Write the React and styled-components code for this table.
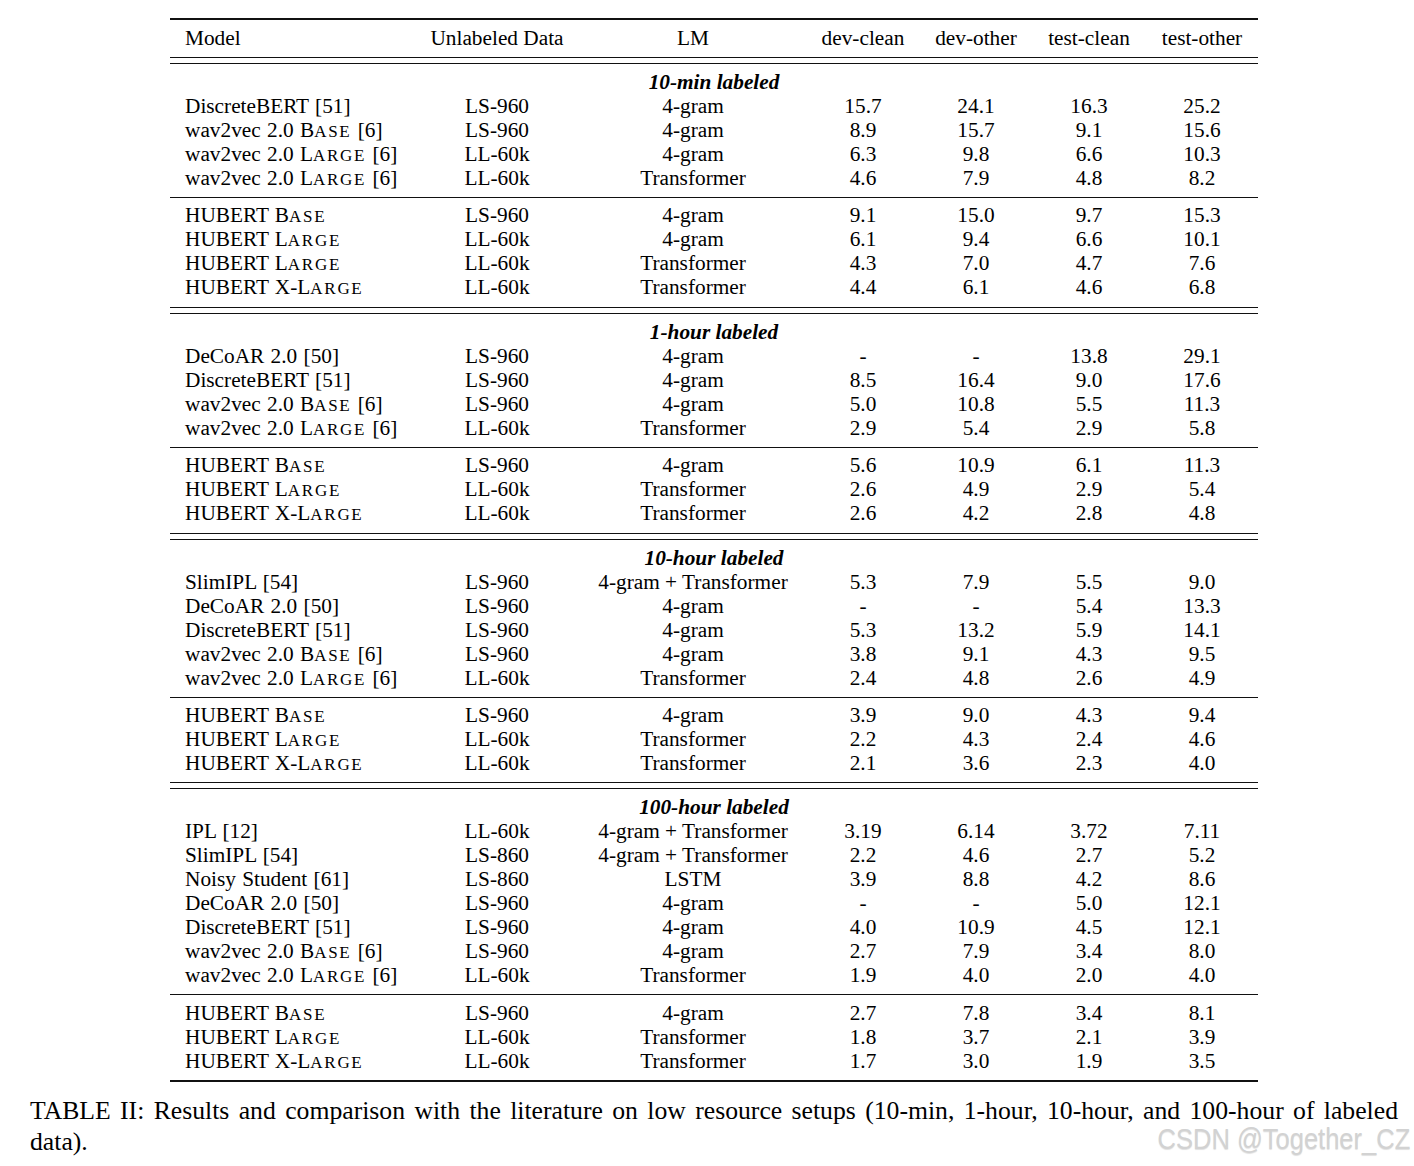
import React from "react";
import styled, { createGlobalStyle } from "styled-components";

const Global = createGlobalStyle`
  html, body { margin: 0; padding: 0; background: #fff; }
  body { font-family: "Liberation Serif", "Times New Roman", serif; color: #000; }
`;

const Page = styled.div`
  position: relative;
  width: 1414px;
  height: 1166px;
  overflow: hidden;
  padding-top: 18px;
  box-sizing: border-box;
`;

const Table = styled.div`
  margin-left: 170px;
  width: 1088px;
  font-size: 21.3px;
`;

const Rule = styled.div`
  height: ${(p) => (p.$thick ? 2 : 1)}px;
  background: #111;
  margin: ${(p) => p.$m || "0"};
  ${(p) =>
    p.$double &&
    `
    height: 1px;
    box-shadow: 0 6px 0 #111;
    margin-bottom: 12px;
  `}
`;

const Row = styled.div`
  display: grid;
  grid-template-columns: 244.5px 165px 227px 113px 113px 113px 113px;
  height: 24px;
  line-height: 24px;
  white-space: nowrap;
`;

const Cell = styled.div`
  text-align: ${(p) => p.$align || "center"};
  padding-left: ${(p) => (p.$align === "left" ? "15px" : "0")};
  word-spacing: ${(p) => (p.$align === "left" ? "1px" : "0")};
`;

const Small = styled.span`
  font-size: 0.8em;
  text-transform: uppercase;
  letter-spacing: 1.7px;
`;

const SectionTitle = styled.div`
  height: 24px;
  line-height: 24px;
  text-align: center;
  font-weight: bold;
  font-style: italic;
`;

const Group = styled.div``;

const Caption = styled.p`
  margin: 13px 0 0 30px;
  width: 1368px;
  font-size: 25.7px;
  line-height: 31px;
  word-spacing: 1.5px;
  text-align: justify;
`;

const Watermark = styled.div`
  position: absolute;
  right: 4px;
  top: 1122px;
  font-family: "Liberation Sans", Arial, sans-serif;
  font-size: 30px;
  color: #d2d2d2;
  text-shadow: 0 1px 1px rgba(0, 0, 0, 0.12);
  transform: scaleX(0.85);
  transform-origin: right center;
  white-space: nowrap;
`;

const W2VB = () => (
  <>wav2vec 2.0 B<Small>ase</Small> [6]</>
);
const W2VL = () => (
  <>wav2vec 2.0 L<Small>arge</Small> [6]</>
);
const HB = () => (<>HUBERT B<Small>ase</Small></>);
const HL = () => (<>HUBERT L<Small>arge</Small></>);
const HXL = () => (<>HUBERT X-L<Small>arge</Small></>);

const sections = [
  {
    title: "10-min labeled",
    a: [
      ["DiscreteBERT [51]", "LS-960", "4-gram", "15.7", "24.1", "16.3", "25.2"],
      [<W2VB />, "LS-960", "4-gram", "8.9", "15.7", "9.1", "15.6"],
      [<W2VL />, "LL-60k", "4-gram", "6.3", "9.8", "6.6", "10.3"],
      [<W2VL />, "LL-60k", "Transformer", "4.6", "7.9", "4.8", "8.2"],
    ],
    b: [
      [<HB />, "LS-960", "4-gram", "9.1", "15.0", "9.7", "15.3"],
      [<HL />, "LL-60k", "4-gram", "6.1", "9.4", "6.6", "10.1"],
      [<HL />, "LL-60k", "Transformer", "4.3", "7.0", "4.7", "7.6"],
      [<HXL />, "LL-60k", "Transformer", "4.4", "6.1", "4.6", "6.8"],
    ],
  },
  {
    title: "1-hour labeled",
    a: [
      ["DeCoAR 2.0 [50]", "LS-960", "4-gram", "-", "-", "13.8", "29.1"],
      ["DiscreteBERT [51]", "LS-960", "4-gram", "8.5", "16.4", "9.0", "17.6"],
      [<W2VB />, "LS-960", "4-gram", "5.0", "10.8", "5.5", "11.3"],
      [<W2VL />, "LL-60k", "Transformer", "2.9", "5.4", "2.9", "5.8"],
    ],
    b: [
      [<HB />, "LS-960", "4-gram", "5.6", "10.9", "6.1", "11.3"],
      [<HL />, "LL-60k", "Transformer", "2.6", "4.9", "2.9", "5.4"],
      [<HXL />, "LL-60k", "Transformer", "2.6", "4.2", "2.8", "4.8"],
    ],
  },
  {
    title: "10-hour labeled",
    a: [
      ["SlimIPL [54]", "LS-960", "4-gram + Transformer", "5.3", "7.9", "5.5", "9.0"],
      ["DeCoAR 2.0 [50]", "LS-960", "4-gram", "-", "-", "5.4", "13.3"],
      ["DiscreteBERT [51]", "LS-960", "4-gram", "5.3", "13.2", "5.9", "14.1"],
      [<W2VB />, "LS-960", "4-gram", "3.8", "9.1", "4.3", "9.5"],
      [<W2VL />, "LL-60k", "Transformer", "2.4", "4.8", "2.6", "4.9"],
    ],
    b: [
      [<HB />, "LS-960", "4-gram", "3.9", "9.0", "4.3", "9.4"],
      [<HL />, "LL-60k", "Transformer", "2.2", "4.3", "2.4", "4.6"],
      [<HXL />, "LL-60k", "Transformer", "2.1", "3.6", "2.3", "4.0"],
    ],
  },
  {
    title: "100-hour labeled",
    a: [
      ["IPL [12]", "LL-60k", "4-gram + Transformer", "3.19", "6.14", "3.72", "7.11"],
      ["SlimIPL [54]", "LS-860", "4-gram + Transformer", "2.2", "4.6", "2.7", "5.2"],
      ["Noisy Student [61]", "LS-860", "LSTM", "3.9", "8.8", "4.2", "8.6"],
      ["DeCoAR 2.0 [50]", "LS-960", "4-gram", "-", "-", "5.0", "12.1"],
      ["DiscreteBERT [51]", "LS-960", "4-gram", "4.0", "10.9", "4.5", "12.1"],
      [<W2VB />, "LS-960", "4-gram", "2.7", "7.9", "3.4", "8.0"],
      [<W2VL />, "LL-60k", "Transformer", "1.9", "4.0", "2.0", "4.0"],
    ],
    b: [
      [<HB />, "LS-960", "4-gram", "2.7", "7.8", "3.4", "8.1"],
      [<HL />, "LL-60k", "Transformer", "1.8", "3.7", "2.1", "3.9"],
      [<HXL />, "LL-60k", "Transformer", "1.7", "3.0", "1.9", "3.5"],
    ],
  },
];

const DataRow = ({ cells }) => (
  <Row>
    {cells.map((c, i) => (
      <Cell key={i} $align={i === 0 ? "left" : "center"}>
        {c}
      </Cell>
    ))}
  </Row>
);

export default function App() {
  return (
    <>
      <Global />
      <Page>
        <Table>
          <Rule $thick $m="0 0 6px 0" />
          <Row>
            <Cell $align="left">Model</Cell>
            <Cell>Unlabeled Data</Cell>
            <Cell>LM</Cell>
            <Cell>dev-clean</Cell>
            <Cell>dev-other</Cell>
            <Cell>test-clean</Cell>
            <Cell>test-other</Cell>
          </Row>
          {sections.map((s, si) => (
            <React.Fragment key={si}>
              <Rule $double $m={si === 0 ? "7px 0 0 0" : "7.5px 0 0 0"} />
              <SectionTitle>{s.title}</SectionTitle>
              <Group>
                {s.a.map((r, i) => (
                  <DataRow key={i} cells={r} />
                ))}
              </Group>
              <Rule $m="7px 0 5.3px 0" />
              <Group>
                {s.b.map((r, i) => (
                  <DataRow key={i} cells={r} />
                ))}
              </Group>
            </React.Fragment>
          ))}
          <Rule $thick $m="7.5px 0 0 0" />
        </Table>
        <Caption>
          TABLE II: Results and comparison with the literature on low resource
          setups (10-min, 1-hour, 10-hour, and 100-hour of labeled data).
        </Caption>
        <Watermark>CSDN @Together_CZ</Watermark>
      </Page>
    </>
  );
}
